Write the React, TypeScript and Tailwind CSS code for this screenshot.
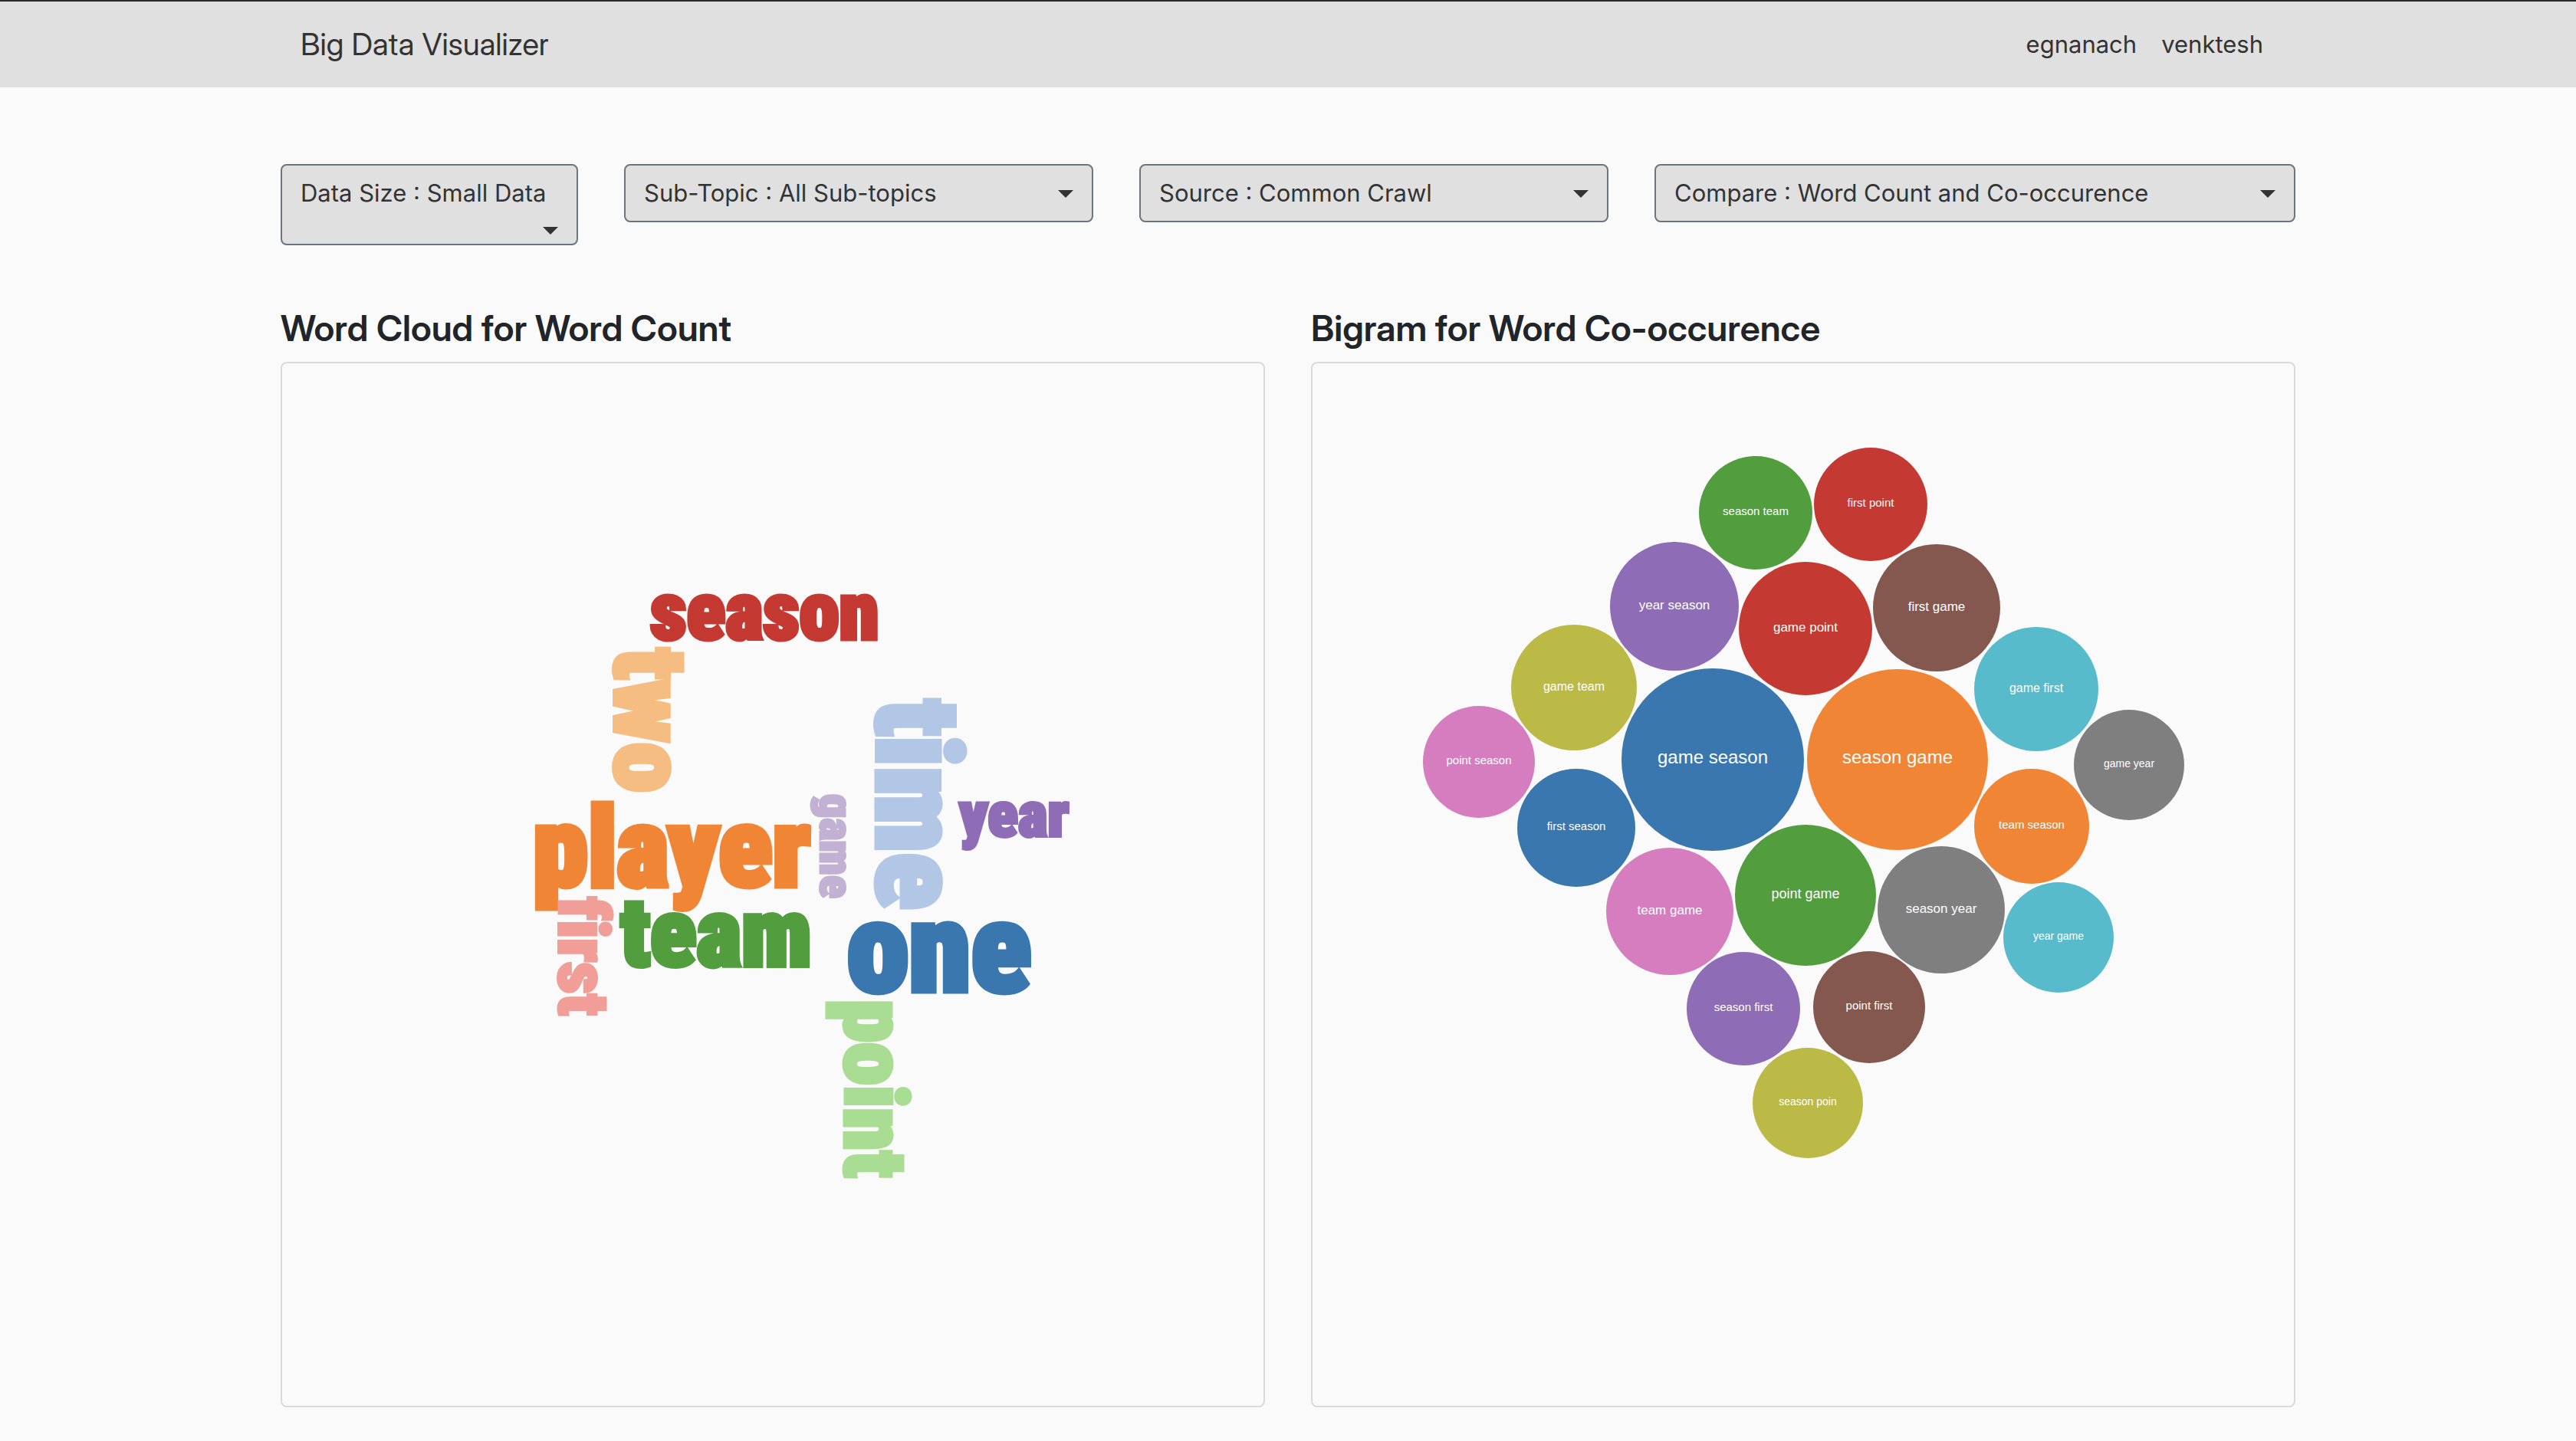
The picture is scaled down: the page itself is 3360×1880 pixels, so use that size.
import React from "react";

type Word = {
  text: string;
  x: number;
  y: number;
  size: number;
  color: string;
  vertical?: boolean;
};

type Bubble = { text: string; x: number; y: number; r: number; color: string };

const words: Word[] = [
  { text: "season", x: 848, y: 834, size: 105, color: "#c43932" },
  { text: "two", x: 802, y: 845, size: 132, color: "#f6bd82", vertical: true },
  { text: "player", x: 695, y: 1156, size: 145, color: "#f08536" },
  { text: "team", x: 809, y: 1260, size: 125, color: "#529d3e" },
  { text: "first", x: 729, y: 1170, size: 91, color: "#f19e99", vertical: true },
  { text: "game", x: 1070, y: 1036, size: 62, color: "#c2b1d3", vertical: true },
  { text: "time", x: 1144, y: 912, size: 153, color: "#b2c6e6", vertical: true },
  { text: "year", x: 1251, y: 1091, size: 82, color: "#8e6db6" },
  { text: "one", x: 1105, y: 1293, size: 163, color: "#3a77ae" },
  { text: "point", x: 1102, y: 1304, size: 113, color: "#aadd94", vertical: true },
];

const bubbles: Bubble[] = [
  { text: "game season", x: 2234, y: 991, r: 119, color: "#3a77ae" },
  { text: "season game", x: 2475, y: 991, r: 118, color: "#f08536" },
  { text: "point game", x: 2355, y: 1168, r: 92, color: "#529d3e" },
  { text: "game point", x: 2355, y: 820, r: 87, color: "#c43932" },
  { text: "year season", x: 2184, y: 791, r: 84, color: "#8e6db6" },
  { text: "first game", x: 2526, y: 793, r: 83, color: "#84584e" },
  { text: "team game", x: 2178, y: 1189, r: 83, color: "#d57dbe" },
  { text: "season year", x: 2532, y: 1187, r: 83, color: "#7f7f7f" },
  { text: "game team", x: 2053, y: 897, r: 82, color: "#bcba47" },
  { text: "game first", x: 2656, y: 899, r: 81, color: "#57bbcc" },
  { text: "first season", x: 2056, y: 1080, r: 77, color: "#3a77ae" },
  { text: "team season", x: 2650, y: 1078, r: 75, color: "#f08536" },
  { text: "season team", x: 2290, y: 669, r: 74, color: "#529d3e" },
  { text: "first point", x: 2440, y: 658, r: 74, color: "#c43932" },
  { text: "season first", x: 2274, y: 1316, r: 74, color: "#8e6db6" },
  { text: "point first", x: 2438, y: 1314, r: 73, color: "#84584e" },
  { text: "point season", x: 1929, y: 994, r: 73, color: "#d57dbe" },
  { text: "game year", x: 2777, y: 998, r: 72, color: "#7f7f7f" },
  { text: "season poin", x: 2358, y: 1439, r: 72, color: "#bcba47" },
  { text: "year game", x: 2685, y: 1223, r: 72, color: "#57bbcc" },
];

const filters = [
  { name: "Data Size", value: "Small Data", span: "col-span-2", pad: "pb-[42px]", caret: "bottom-3.5" },
  { name: "Sub-Topic", value: "All Sub-topics", span: "col-span-3", pad: "pb-3", caret: "top-[34px]" },
  { name: "Source", value: "Common Crawl", span: "col-span-3", pad: "pb-3", caret: "top-[34px]" },
  { name: "Compare", value: "Word Count and Co-occurence", span: "col-span-4", pad: "pb-3", caret: "top-[34px]" },
];

function Filter({ name, value, span, pad, caret }: (typeof filters)[number]) {
  return (
    <div className={`${span} px-[30px]`}>
      <div className="relative">
        <select
          aria-label={name}
          className={`block w-full appearance-none rounded-lg border-2 border-[#6c757d] bg-[#e0e0e0] px-6 pt-3 text-[31px] leading-[48px] text-[#333] ${pad}`}
        >
          <option>{`${name} : ${value}`}</option>
        </select>
        <svg
          viewBox="0 0 20 10"
          className={`pointer-events-none absolute right-[26px] h-[10px] w-5 ${caret}`}
          aria-hidden="true"
        >
          <path d="M0 0H20L10 10Z" fill="#333" />
        </svg>
      </div>
    </div>
  );
}

function Panel({ title, children }: { title: string; children: React.ReactNode }) {
  return (
    <section className="px-[30px]">
      <h2 className="mb-4 font-['Inter_Display','Inter',sans-serif] text-[47px] font-semibold leading-[56px] text-[#212529]">
        {title}
      </h2>
      <div className="rounded-lg border-2 border-[#dadada]">{children}</div>
    </section>
  );
}

function WordCloud() {
  return (
    <svg viewBox="368 474 1280 1360" className="block h-auto w-full" role="img" aria-label="Word cloud">
      {words.map((w) => (
        <text
          key={w.text}
          transform={`translate(${w.x} ${w.y}) rotate(${w.vertical ? 90 : 0})`}
          fontSize={w.size}
          fill={w.color}
          stroke={w.color}
          strokeWidth={Math.round(w.size / 22)}
          className="font-['Impact','Roboto_Condensed','Roboto',sans-serif] font-black [font-variant-ligatures:none]"
        >
          {w.text}
        </text>
      ))}
    </svg>
  );
}

function BubbleChart() {
  return (
    <svg viewBox="1712 474 1280 1360" className="block h-auto w-full" role="img" aria-label="Bigram bubble chart">
      {bubbles.map((b) => {
        const size = Math.round(b.r / 5);
        return (
          <g key={b.text}>
            <circle cx={b.x} cy={b.y} r={b.r} fill={b.color} />
            <text
              x={b.x}
              y={b.y + Math.round(size * 0.22)}
              fontSize={size}
              textAnchor="middle"
              fill="#fff"
              className="font-['Liberation_Sans',sans-serif]"
            >
              {b.text}
            </text>
          </g>
        );
      })}
    </svg>
  );
}

export default function App() {
  return (
    <div className="min-h-screen bg-[#fafafa] pb-11 font-['Inter',sans-serif] text-[#333]">
      <header className="border-t-2 border-[#2b2b2b] bg-[#e0e0e0]">
        <div className="mx-auto flex h-28 w-4/5 items-center justify-between px-14">
          <a href="#" className="font-['Inter_Display','Inter',sans-serif] text-[40px] leading-[60px]">
            Big Data Visualizer
          </a>
          <nav className="flex gap-8 pr-4 text-[31px] leading-[48px]">
            <a href="#egnanach">egnanach</a>
            <a href="#venktesh">venktesh</a>
          </nav>
        </div>
      </header>
      <main className="mx-auto w-4/5">
        <div className="mt-[100px] grid grid-cols-12 items-start">
          {filters.map((f) => (
            <Filter key={f.name} {...f} />
          ))}
        </div>
        <div className="mt-20 grid grid-cols-2">
          <Panel title="Word Cloud for Word Count">
            <WordCloud />
          </Panel>
          <Panel title="Bigram for Word Co-occurence">
            <BubbleChart />
          </Panel>
        </div>
      </main>
    </div>
  );
}
